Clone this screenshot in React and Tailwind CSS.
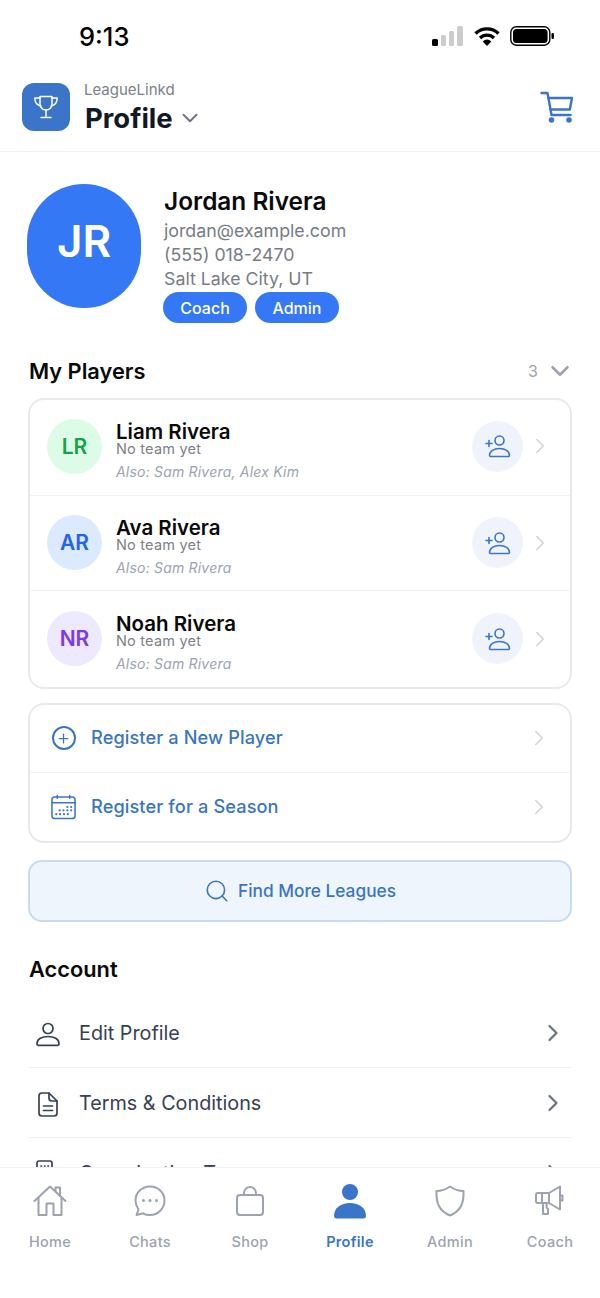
import React from "react";
import { ChevronDown, ChevronRight, Search, Plus } from "lucide-react";

const players = [
  { initials: "LR", name: "Liam Rivera", also: "Also: Sam Rivera, Alex Kim", bg: "bg-[#dcfce7]", fg: "text-[#16a34a]" },
  { initials: "AR", name: "Ava Rivera", also: "Also: Sam Rivera", bg: "bg-[#dbeafe]", fg: "text-[#2563eb]" },
  { initials: "NR", name: "Noah Rivera", also: "Also: Sam Rivera", bg: "bg-[#ede9fe]", fg: "text-[#7c3aed]" },
];

function Trophy() {
  return (
    <svg width="28" height="28" viewBox="0 0 28 28" fill="none" stroke="white" strokeWidth="1.5" strokeLinejoin="round" strokeLinecap="round">
      <path d="M8 3.5h12v7.5a6 6 0 0 1-12 0z" />
      <path d="M8 5H2.8c0 4.5 1.8 7 6 8M20 5h5.2c0 4.5-1.8 7-6 8" />
      <path d="M14 17v7M9 24.5h10" />
    </svg>
  );
}

function Cart() {
  return (
    <svg width="34" height="32" viewBox="0 0 34 32" fill="none" stroke="#3a75c9" strokeWidth="2.4" strokeLinejoin="round" strokeLinecap="round">
      <path d="M1.5 2h6l4 22h19" />
      <path d="M8.5 7h23.5l-2.2 11.5H10.5" />
      <circle cx="11.5" cy="29" r="1.6" fill="#3a75c9" />
      <circle cx="29" cy="29" r="1.6" fill="#3a75c9" />
    </svg>
  );
}

function StatusIcons() {
  return (
    <div className="flex items-center gap-[10px]">
      <svg width="32" height="20" viewBox="0 0 32 20">
        <rect x="0" y="13" width="6" height="7" rx="1.5" fill="#000" />
        <rect x="9" y="9" width="5" height="11" rx="1.5" fill="#ccc" />
        <rect x="17" y="5" width="5" height="15" rx="1.5" fill="#ccc" />
        <rect x="25" y="0" width="6" height="20" rx="1.5" fill="#ccc" />
      </svg>
      <svg width="26" height="20" viewBox="0 0 26 20" fill="none" stroke="#000" strokeWidth="3.4">
        <path d="M1.5 7.5a16.5 16.5 0 0 1 23 0" />
        <path d="M6 12a10 10 0 0 1 14 0" />
        <path d="M13 20l-4.3-4.6a6 6 0 0 1 8.6 0z" fill="#000" stroke="none" />
      </svg>
      <svg width="45" height="20" viewBox="0 0 45 20">
        <rect x="0.8" y="0.8" width="39" height="18.4" rx="5.5" fill="none" stroke="#000" strokeWidth="1.4" />
        <rect x="3" y="3" width="34.6" height="14" rx="3.5" fill="#000" />
        <rect x="41.5" y="7" width="2.5" height="6" rx="1.2" fill="#000" />
      </svg>
    </div>
  );
}

function AddUser() {
  return (
    <svg width="26" height="24" viewBox="0 0 26 24" fill="none" stroke="#3a75c9" strokeWidth="1.6" strokeLinecap="round" strokeLinejoin="round">
      <circle cx="14.5" cy="6.5" r="4.5" />
      <path d="M4.5 21.5c0-4.5 4.5-7 10-7s10 2.5 10 7c0 .6-.4 1-1 1h-18c-.6 0-1-.4-1-1z" />
      <path d="M1 9.5h6M4 6.5v6" />
    </svg>
  );
}

function CalendarIcon() {
  const dots = [[17, 13], [21, 13], [9, 16.5], [13, 16.5], [17, 16.5], [21, 16.5], [5.5, 20.5], [9.5, 20.5], [13.5, 20.5], [17.5, 20.5]];
  return (
    <svg width="26" height="26" viewBox="0 0 26 26" fill="none" stroke="#3a75c9" strokeWidth="1.6" strokeLinecap="round">
      <rect x="1" y="2.5" width="24" height="22.5" rx="3" />
      <path d="M1 8.5h24M6.5 1v3M19.5 1v3" />
      {dots.map(([x, y]) => (
        <circle key={`${x}-${y}`} cx={x} cy={y} r="1.15" fill="#3a75c9" stroke="none" />
      ))}
    </svg>
  );
}

function Avatar({ p }) {
  return (
    <div className={`w-[55px] h-[55px] mb-[2px] rounded-full flex items-center justify-center text-[21px] font-semibold ${p.bg} ${p.fg}`}>
      {p.initials}
    </div>
  );
}

function PlayerRow({ p, first, last }) {
  return (
    <div className={`h-[95.5px] pl-[17px] pr-[17px] flex items-center ${first ? "" : "pt-[2px]"} ${last ? "" : "border-b border-[#f1f2f4]"}`}>
      <Avatar p={p} />
      <div className="ml-[14px] pt-[5px] flex-1 flex flex-col">
        <div className="mt-[4px] text-[20.5px] leading-[18px] font-semibold text-[#0a0a0a]">{p.name}</div>
        <div className="text-[14.5px] leading-[16px] text-[#7b808a] tracking-[0.2px]">No team yet</div>
        <div className="mt-[6px] text-[14px] leading-[18px] italic text-[#9ca3af] tracking-[0.2px]">{p.also}</div>
      </div>
      <div className="w-[51px] h-[51px] mb-[2px] rounded-full bg-[#eff4fc] flex items-center justify-center">
        <AddUser />
      </div>
      <ChevronRight size={26} strokeWidth={1.5} className="ml-[4px] mb-[2px] text-[#d1d5db]" />
    </div>
  );
}

function ActionRow({ icon, label, last }) {
  return (
    <div className={`h-[68px] pl-[21px] pr-[18px] flex items-center ${last ? "" : "border-b border-[#f1f2f4]"}`}>
      <div className="w-[25px] flex justify-center">{icon}</div>
      <span className="ml-[15px] flex-1 text-[18.2px] font-medium text-[#3a75c0] tracking-[0.1px]">{label}</span>
      <ChevronRight size={26} strokeWidth={1.5} className="text-[#d1d5db]" />
    </div>
  );
}

function AccountRow({ icon, label }) {
  return (
    <div className="h-[70px] pt-[4px] flex items-center border-b border-[#f1f2f4] pr-[5px]">
      <div className="w-[40px] flex justify-center">{icon}</div>
      <span className="ml-[11px] flex-1 text-[19.8px] text-[#374151]">{label}</span>
      <ChevronRight size={28} strokeWidth={1.9} className="mb-[2px] text-[#6b7280]" />
    </div>
  );
}

const accountStroke = { fill: "none", stroke: "#374151", strokeWidth: 1.7, strokeLinejoin: "round", strokeLinecap: "round" };

const navIconProps = { fill: "none", stroke: "#9ca3af", strokeWidth: 2, strokeLinejoin: "round", strokeLinecap: "round" };

const navItems = [
  {
    label: "Home",
    icon: (
      <svg width="34" height="32" viewBox="0 0 34 32" {...navIconProps}>
        <path d="M1.5 16L17 1.5 32.5 16" />
        <path d="M5.5 13v17h8V18.5h7V30h8V13" />
        <path d="M22.500 6.500V2.500h4.500v8.500" />
      </svg>
    ),
  },
  {
    label: "Chats",
    icon: (
      <svg width="32" height="32" viewBox="0 0 32 32" {...navIconProps}>
        <path d="M16 1.5c8 0 14.5 6 14.5 14s-6.500 14.500-14.500 14.500c-2.500 0-5-.5-7-1.700l-6.500 1.700 2-5.500C2.500 21.500 1.500 18.500 1.500 15.500 1.500 7.500 8 1.500 16 1.500z" />
        <circle cx="9.500" cy="15.500" r="1.500" fill="#9ca3af" stroke="none" />
        <circle cx="16" cy="15.500" r="1.500" fill="#9ca3af" stroke="none" />
        <circle cx="22.500" cy="15.500" r="1.500" fill="#9ca3af" stroke="none" />
      </svg>
    ),
  },
  {
    label: "Shop",
    icon: (
      <svg width="28" height="30" viewBox="0 0 28 30" {...navIconProps}>
        <rect x="1" y="9" width="26" height="20" rx="3" />
        <path d="M8 9V7a6 6 0 0 1 12 0v2" />
      </svg>
    ),
  },
  {
    label: "Profile",
    active: true,
    icon: (
      <svg width="32" height="36" viewBox="0 0 32 36" fill="#3a75c9">
        <circle cx="16" cy="9" r="8" />
        <path d="M0 33c0-8 7-13 16-13s16 5 16 13c0 1.500-1 2.500-2.500 2.500h-27C1 35.500 0 34.500 0 33z" />
      </svg>
    ),
  },
  {
    label: "Admin",
    icon: (
      <svg width="30" height="32" viewBox="0 0 30 32" {...navIconProps}>
        <path d="M15 1.500c3.500 2.500 8 4.500 13.500 4.500 .5 12-2.500 20-13.500 24.500C4 26 1 18 1.500 6 7 6 11.500 4 15 1.500z" />
      </svg>
    ),
  },
  {
    label: "Coach",
    icon: (
      <svg width="30" height="32" viewBox="0 0 30 32" {...navIconProps}>
        <path d="M7 8h7l11-6.500v23L14 18H2.500C1.500 18 1 17 1 16v-6c0-1 .5-2 1.500-2H7z" />
        <path d="M7 8v10M14 8v10" />
        <path d="M8 18v11h5v-5l-1.500-1.500V18" />
        <path d="M25 10.500h2.500v5H25" />
      </svg>
    ),
  },
];

export default function App() {
  return (
    <div className="relative w-[600px] h-[1298px] overflow-hidden bg-white font-['Inter',sans-serif]">
      <div className="h-[70px] pt-[2px] pl-[79px] pr-[45px] flex items-center justify-between">
        <span className="mt-[2px] text-[25.5px] font-medium text-black">9:13</span>
        <StatusIcons />
      </div>

      <header className="h-[82px] pb-[8px] pl-[22px] pr-[26px] flex items-center border-b border-[#f1f2f4]">
        <div className="w-[48px] h-[48px] rounded-[12px] bg-[#3a75c9] flex items-center justify-center">
          <Trophy />
        </div>
        <div className="ml-[14px] flex-1">
          <div className="mt-[3px] text-[15px] leading-[18px] text-[#7b808a]">LeagueLinkd</div>
          <div className="flex items-center mt-[1px] ml-[1px] gap-[4px]">
            <span className="text-[27.5px] leading-[36px] font-bold text-[#111827]">Profile</span>
            <ChevronDown size={26} strokeWidth={1.7} className="text-[#6b7280] mt-[1px]" />
          </div>
        </div>
        <Cart />
      </header>

      <main className="px-[28px]">
        <section className="pt-[32px] flex">
          <div className="ml-[-1px] w-[114px] h-[124px] pb-[10px] rounded-full bg-[#3478f6] flex items-center justify-center text-white text-[44px] font-semibold">
            JR
          </div>
          <div className="ml-[22px] flex flex-col items-start">
            <div className="ml-[1px] text-[24.4px] leading-[35px] font-semibold text-[#0a0a0a]">Jordan Rivera</div>
            <div className="ml-[1px] text-[17.8px] leading-[24px] text-[#777c85]">jordan@example.com</div>
            <div className="ml-[1px] text-[17.8px] leading-[24px] text-[#777c85]">(555) 018-2470</div>
            <div className="ml-[1px] text-[17.8px] leading-[24px] text-[#777c85]">Salt Lake City, UT</div>
            <div className="mt-[1px] flex gap-[8px]">
              <span className="w-[84px] h-[31px] rounded-full bg-[#3478f6] text-white text-[16px] font-medium flex items-center justify-center">Coach</span>
              <span className="w-[84px] h-[31px] rounded-full bg-[#3478f6] text-white text-[16px] font-medium flex items-center justify-center">Admin</span>
            </div>
          </div>
        </section>

        <section className="mt-[30px]">
          <div className="h-[36px] flex items-center justify-between">
            <h2 className="ml-[1px] text-[21.8px] font-semibold text-[#0a0a0a]">My Players</h2>
            <div className="flex items-center gap-[7px] mr-[-3px] text-[#9ca3af]">
              <span className="text-[16px]">3</span>
              <ChevronDown size={30} strokeWidth={2.1} />
            </div>
          </div>
          <div className="mt-[9px] border-2 border-[#e8e9ed] rounded-[16px] overflow-hidden">
            {players.map((p, i) => (
              <PlayerRow key={p.initials} p={p} first={i === 0} last={i === players.length - 1} />
            ))}
          </div>
        </section>

        <div className="mt-[14px] border-2 border-[#e8e9ed] rounded-[16px] overflow-hidden">
          <ActionRow
            label="Register a New Player"
            icon={
              <span className="w-[24px] h-[24px] shrink-0 rounded-full border-2 border-[#3a75c0] flex items-center justify-center text-[#3a75c0]">
                <Plus size={15} strokeWidth={2} />
              </span>
            }
          />
          <ActionRow label="Register for a Season" icon={<CalendarIcon />} last />
        </div>

        <div className="mt-[17px] h-[62px] rounded-[14px] border-2 border-[#c7dbf3] bg-[#eff5fd] flex items-center justify-center gap-[8px]">
          <Search size={26} strokeWidth={1.5} className="text-[#3a75c0]" />
          <span className="text-[17.3px] font-medium text-[#3a75c0]">Find More Leagues</span>
        </div>

        <h2 className="mt-[30px] ml-[1px] text-[21.8px] leading-[34px] font-semibold text-[#0a0a0a]">Account</h2>

        <div className="mt-[12px]">
          <AccountRow
            label="Edit Profile"
            icon={
              <svg width="24" height="25" viewBox="0 0 24 25" {...accountStroke}>
                <circle cx="12" cy="6.500" r="5" />
                <path d="M1 21.500c0-4.500 5-7 11-7s11 2.500 11 7c0 1-.5 1.800-1.500 1.800h-19C1.500 23.300 1 22.500 1 21.500z" />
              </svg>
            }
          />
          <AccountRow
            label="Terms & Conditions"
            icon={
              <svg width="20" height="25" viewBox="0 0 20 25" {...accountStroke}>
                <path d="M4 1h7l8 8v12c0 1.700-1.300 3-3 3H4c-1.700 0-3-1.300-3-3V4c0-1.700 1.300-3 3-3z" />
                <path d="M11 1v5c0 1.700 1.300 3 3 3h5M5.500 14h9M5.500 18.500h9" />
              </svg>
            }
          />
          <AccountRow
            label="Organization Teams"
            icon={
              <svg width="24" height="28" viewBox="0 0 24 28" {...accountStroke}>
                <path d="M1 27V3a2 2 0 0 1 2-2h11a2 2 0 0 1 2 2v24" />
                <path d="M5 6h.5M8.500 6h.5M12 6h.5" />
              </svg>
            }
          />
        </div>
      </main>

      <nav className="absolute left-0 right-0 bottom-0 h-[131px] bg-white border-t border-[#f1f2f4] pt-[13px] grid grid-cols-6">
        {navItems.map((item) => (
          <div key={item.label} className="flex flex-col items-center">
            <div className="h-[40px] flex items-center justify-center">{item.icon}</div>
            <span className={`mt-[11px] text-[14.5px] leading-[20px] font-medium tracking-[0.3px] ${item.active ? "text-[#3a75c9] font-semibold" : "text-[#9ca3af]"}`}>
              {item.label}
            </span>
          </div>
        ))}
      </nav>
    </div>
  );
}
